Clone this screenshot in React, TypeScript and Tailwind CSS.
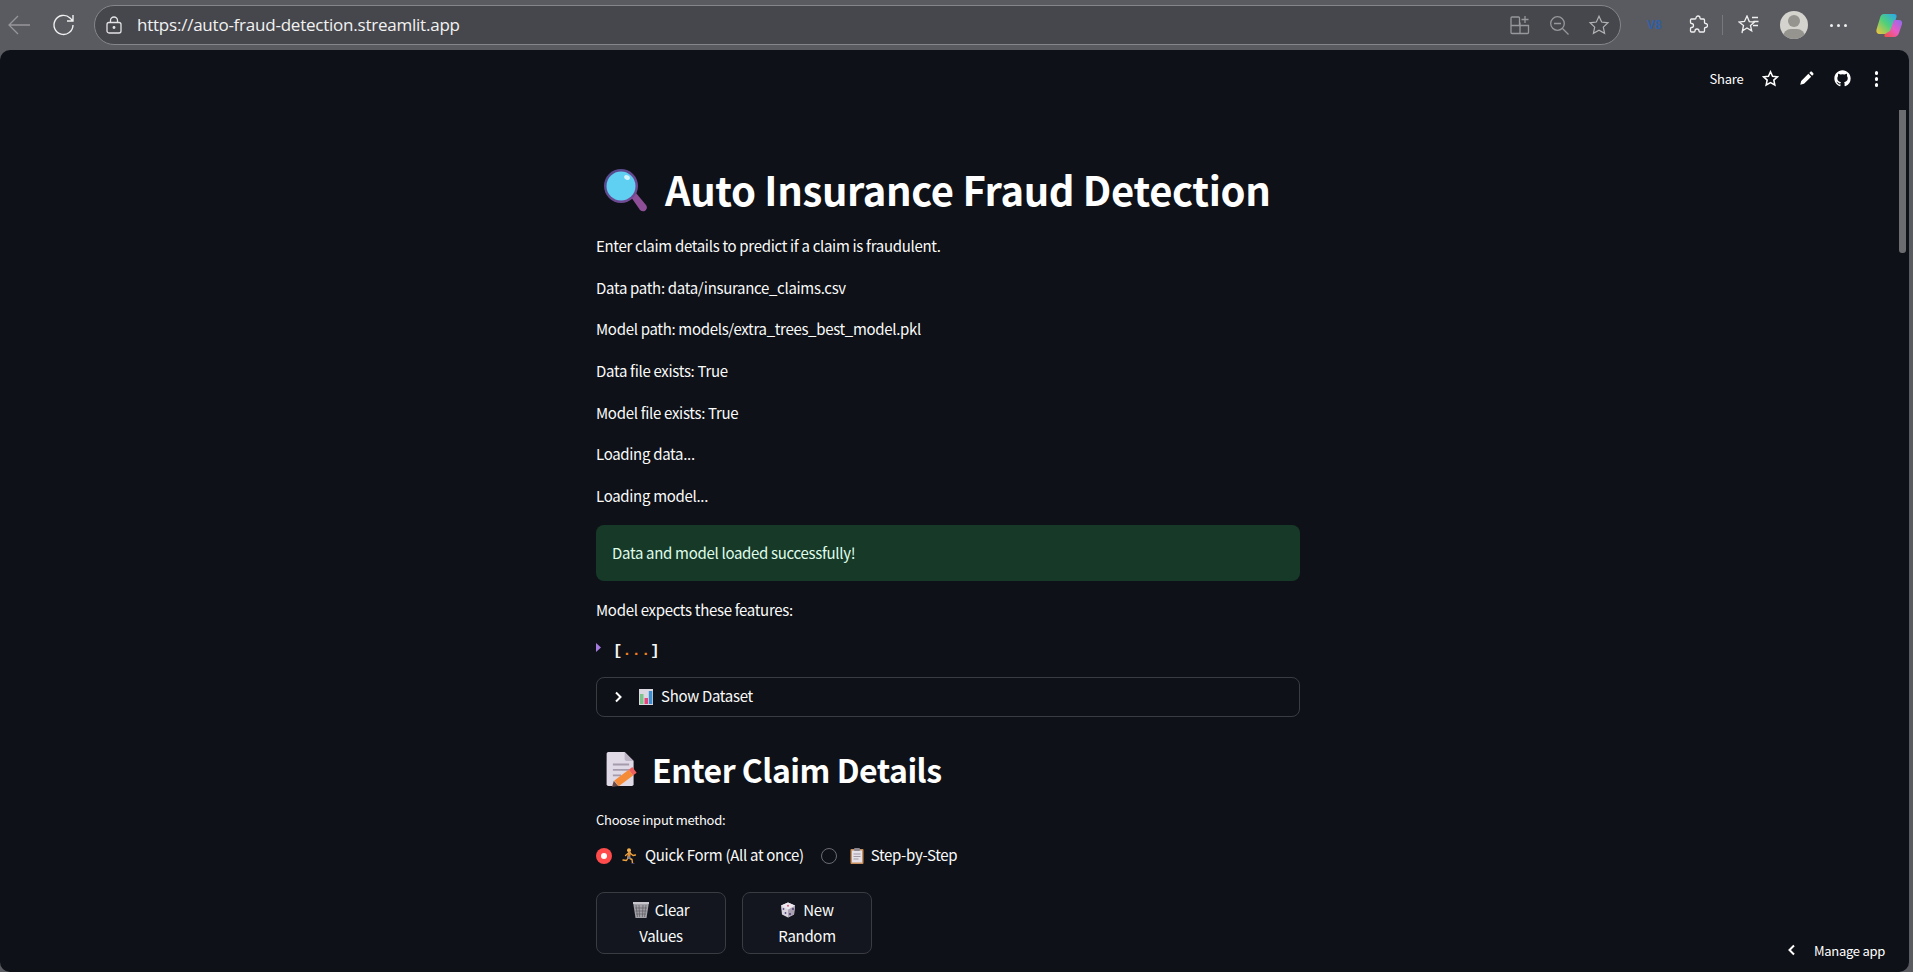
import React from "react";

const sans = "font-['Noto_Sans_CJK_SC',sans-serif]";

function Lens({ className = "" }: { className?: string }) {
  return (
    <svg viewBox="3 3 43 43" className={className}>
      <defs>
        <linearGradient id="lensRim" x1="0" y1="0" x2="1" y2="1">
          <stop offset="0" stopColor="#4f4a8c" />
          <stop offset="1" stopColor="#7a4a96" />
        </linearGradient>
      </defs>
      <path d="M30 31l5-4 10 12c1.500 2 1 4-.6 5.500-1.800 1.400-3.800 1-5.400-.5z" fill="#8f4f98" />
      <circle cx="20" cy="20" r="17" fill="url(#lensRim)" />
      <circle cx="20" cy="20" r="14.500" fill="#5fcff2" />
      <ellipse cx="26" cy="11.500" rx="3" ry="2.200" fill="#d4f3fb" transform="rotate(30 26 11.500)" />
    </svg>
  );
}

function Memo({ className = "" }: { className?: string }) {
  return (
    <svg viewBox="0 0 36 40" className={className}>
      <path d="M4 1h18l10 10v26a2 2 0 0 1-2 2H4a2 2 0 0 1-2-2V3a2 2 0 0 1 2-2z" fill="#e0d9e6" />
      <path d="M22 1l10 10h-8a2 2 0 0 1-2-2z" fill="#bdb4c6" />
      <path d="M9 15h18M9 21h18M9 27h9" stroke="#a49cac" strokeWidth="2" />
      <path d="M13 36l16-12" stroke="#f58a37" strokeWidth="8" />
      <path d="M29 24l4-3" stroke="#ef5f5c" strokeWidth="8" />
      <path d="M8 40l2-7 5 6z" fill="#6b4a46" />
    </svg>
  );
}

function Chart({ className = "" }: { className?: string }) {
  return (
    <svg viewBox="1 0 14 16" className={className}>
      <rect x="1" y="0" width="14" height="16" fill="#dcd8e2" />
      <rect x="2" y="5" width="3.500" height="10" fill="#7cc48a" />
      <rect x="6.500" y="9" width="3.500" height="6" fill="#e8447c" />
      <rect x="10.800" y="2" width="3.500" height="13" fill="#3d8fd1" />
    </svg>
  );
}

function Runner({ className = "" }: { className?: string }) {
  return (
    <svg viewBox="0 0 16 16" className={className}>
      <circle cx="7" cy="2.200" r="2" fill="#f5b04a" />
      <path d="M7.500 5l-1 4.500" stroke="#d98b3c" strokeWidth="3" strokeLinecap="round" />
      <path d="M8 5l3 2.500 2.500-.5M6.500 5L3.500 7.500" fill="none" stroke="#f1a33c" strokeWidth="1.300" strokeLinecap="round" strokeLinejoin="round" />
      <path d="M7 10l3 1.500 .5 3.500" fill="none" stroke="#f1a33c" strokeWidth="1.400" strokeLinecap="round" strokeLinejoin="round" />
      <path d="M6 10l-1.500 2.500L1 12" fill="none" stroke="#f1a33c" strokeWidth="1.400" strokeLinecap="round" strokeLinejoin="round" />
      <path d="M5.500 8.500h3v2.500h-3z" fill="#7e7f93" />
      <path d="M9.500 15.500h3" stroke="#3f3a66" strokeWidth="1" />
    </svg>
  );
}

function Clipboard({ className = "" }: { className?: string }) {
  return (
    <svg viewBox="0 0 14 16" className={className}>
      <rect x="0.500" y="1" width="13" height="15" rx="1" fill="#c88f5c" />
      <rect x="2" y="2.500" width="10" height="12" fill="#e6e1e8" />
      <rect x="4" y="0" width="6" height="3" rx="1" fill="#8b8790" />
      <path d="M3.500 6h7M3.500 8.500h7M3.500 11h5" stroke="#9e99a3" strokeWidth="1" />
    </svg>
  );
}

function Trash({ className = "" }: { className?: string }) {
  return (
    <svg viewBox="0 0 16 16" className={className}>
      <path d="M0 0h16l-2.500 16h-11z" fill="#a3a1a8" />
      <path d="M3 3l1.500 12M6 3l.6 12M10 3l-.6 12M13 3l-1.500 12M2 6h12M2.500 9h11M3 12h10" stroke="#5e5d63" strokeWidth=".7" />
      <rect x="0" y="0" width="16" height="2" fill="#c8c6cc" />
    </svg>
  );
}

function Die({ className = "" }: { className?: string }) {
  return (
    <svg viewBox="0 0 16 16" className={className}>
      <path d="M8 .500l7 3-1 9-6 3-6-3-1-9z" fill="#d8d3dc" />
      <path d="M8 7.500v8l6-3 1-9z" fill="#aaa2b2" />
      <path d="M1 3.500L8 .500l7 3-7 4z" fill="#ece8ef" />
      <circle cx="8" cy="3.800" r="1" fill="#e0567a" />
      <circle cx="3.500" cy="7" r=".9" fill="#5c4a86" />
      <circle cx="5.500" cy="11" r=".9" fill="#5c4a86" />
      <circle cx="10" cy="12" r=".9" fill="#453368" />
      <circle cx="13" cy="7" r=".9" fill="#453368" />
    </svg>
  );
}

function Para({ children }: { children: React.ReactNode }) {
  return <p className="text-[15px] tracking-[-0.310px] leading-[26px] mb-[15.700px]">{children}</p>;
}

function Browser() {
  return (
    <div className="h-[50px] shrink-0 bg-[#5a5b60] flex items-center pl-[7px] pr-[10px]">
      <svg viewBox="0 0 24 24" className="w-[24px] h-[24px] mr-[21px]" fill="none" stroke="#96979a" strokeWidth="1.300">
        <path d="M23 12H2M11 3l-9 9 9 9" />
      </svg>
      <svg viewBox="0 0 24 24" className="w-[24px] h-[24px] mr-[18px]" fill="none" stroke="#f0f0f0" strokeWidth="1.400">
        <path d="M21 12a9.500 9.500 0 1 1-3-7l3 3M21 2v6h-6" />
      </svg>
      <div className="flex-1 h-[40px] rounded-[20px] bg-[#46474c] border border-[#85868a] flex items-center pl-[11px] pr-[10px] mr-[26px]">
        <svg viewBox="0 0 16 18" className="w-[16px] h-[18px] mr-[15px]" fill="none" stroke="#e4e4e6" strokeWidth="1.300">
          <rect x="1" y="6.500" width="14" height="10.500" rx="2" />
          <path d="M4.500 6.500V4.500a3.500 3.500 0 0 1 7 0v2" />
          <circle cx="8" cy="11.500" r=".8" fill="#e4e4e6" />
        </svg>
        <span className="font-['Open_Sans',sans-serif] text-[17px] text-[#f2f2f2] tracking-[-0.230px]">https://auto-fraud-detection.streamlit.app</span>
        <div className="ml-auto flex items-center gap-[19px]">
          <svg viewBox="0 0 20 20" className="w-[20px] h-[20px]" fill="none" stroke="#97989b" strokeWidth="1.300">
            <path d="M10 7.500v11H2a1 1 0 0 1-1-1V3a1 1 0 0 1 1-1h6.500a1 1 0 0 1 1 1v7.500h9v7a1 1 0 0 1-1 1H10M1 10.500h9M15 1v7M11.500 4.500h7" />
          </svg>
          <svg viewBox="0 0 20 20" className="w-[20px] h-[20px]" fill="none" stroke="#97989b" strokeWidth="1.300">
            <circle cx="8.500" cy="8.500" r="6.800" />
            <path d="M5 8.500h7M13.500 13.500l6 6" />
          </svg>
          <svg viewBox="0 0 24 24" className="w-[22px] h-[22px]" fill="none" stroke="#b2b3b5" strokeWidth="1.300">
            <path d="M12 2.500l2.900 6.300 6.900.8-5.100 4.700 1.400 6.800-6.100-3.400-6.100 3.400 1.400-6.800-5.100-4.700 6.900-.8z" />
          </svg>
        </div>
      </div>
      <div className="w-[16px] h-[16px] text-[#2f5fa8] font-bold text-[12px] leading-[16px] font-['Liberation_Sans',sans-serif] mr-[25px]">V8</div>
      <svg viewBox="0 0 20 20" className="w-[20px] h-[20px] mr-[14px]" fill="none" stroke="#f0f0f0" strokeWidth="1.300">
        <path d="M8 3a2 2 0 0 1 4 0c0 1 .500 1 1 1h2.500a1 1 0 0 1 1 1v2.500c0 .500.500 1 1 1a2 2 0 0 1 0 4c-.500 0-1 .500-1 1V16a1 1 0 0 1-1 1H12c-.500 0-1-.500-1-1a2 2 0 0 0-4 0c0 .500-.500 1-1 1H3.500a1 1 0 0 1-1-1v-2.500c0-.500.500-1 1-1a2 2 0 0 0 0-4c-.500 0-1-.500-1-1V5a1 1 0 0 1 1-1H7c.500 0 1 0 1-1z" />
      </svg>
      <div className="w-px h-[20px] bg-[#77787c] mr-[15px]" />
      <svg viewBox="0 0 22 20" className="w-[22px] h-[20px] mr-[20px]" fill="none" stroke="#f0f0f0" strokeWidth="1.300">
        <path d="M9 1l2.300 5.600 5.200.4-4 3.400 1.200 5.500L9 13l-4.700 3-.3 2 1.500-7.600L1 7l5.500-.5zM14 2.500h6M15.500 6.500h5M15 10.500h5" />
      </svg>
      <div className="w-[28px] h-[28px] rounded-full bg-[#d5d3cd] relative overflow-hidden mr-[22px]">
        <div className="absolute left-[8px] top-[4px] w-[12px] h-[12px] rounded-full bg-[#96948f]" />
        <div className="absolute left-[3px] top-[18px] w-[22px] h-[16px] rounded-full bg-[#96948f]" />
      </div>
      <div className="flex gap-[4px] mr-[28px]">
        <i className="w-[3px] h-[3px] rounded-full bg-[#f0f0f0]" />
        <i className="w-[3px] h-[3px] rounded-full bg-[#f0f0f0]" />
        <i className="w-[3px] h-[3px] rounded-full bg-[#f0f0f0]" />
      </div>
      <svg viewBox="0 0 28 28" className="w-[28px] h-[28px]">
        <defs>
          <linearGradient id="cp1" x1="0" y1="1" x2="1" y2="0">
            <stop offset="0" stopColor="#f9c33a" />
            <stop offset=".5" stopColor="#4fd07a" />
            <stop offset="1" stopColor="#2aa6f0" />
          </linearGradient>
          <linearGradient id="cp2" x1="0" y1="1" x2="1" y2="0">
            <stop offset="0" stopColor="#f4503c" />
            <stop offset=".5" stopColor="#e85bc4" />
            <stop offset="1" stopColor="#8a6cf0" />
          </linearGradient>
        </defs>
        <path d="M9 3h10c2 0 3 1 2.500 3L17 20c-.600 2-2 3-4 3H5c-3 0-4-2-3.500-4.500L5 7c.500-2.500 2-4 4-4z" fill="url(#cp1)" />
        <path d="M19 9h5c2.500 0 3.500 2 3 4l-3 9c-.600 2-2.500 4-5 4h-8c-2 0-2-2-1-3l5-3z" fill="url(#cp2)" />
      </svg>
    </div>
  );
}

export default function App() {
  return (
    <div className={`w-[1913px] h-[972px] overflow-hidden bg-[#5a5b60] flex flex-col ${sans}`}>
      <Browser />
      <div className="flex-1 min-h-0 mr-[4px] rounded-[10px] bg-[#0e1117] text-[#fafafa] relative overflow-hidden">
        <div className="flex items-center justify-end pt-[19px] pr-[31px] text-white">
          <span className="text-[13px] tracking-[-0.200px] mr-[18px]">Share</span>
          <svg viewBox="0 0 24 24" className="w-[17px] h-[17px] mr-[20px]" fill="none" stroke="#fff" strokeWidth="2.200">
            <path d="M12 2.500l2.900 6.300 6.900.8-5.100 4.700 1.400 6.800-6.100-3.400-6.100 3.400 1.400-6.800-5.100-4.700 6.900-.8z" />
          </svg>
          <svg viewBox="0 0 24 24" className="w-[15px] h-[15px] mr-[20px]" fill="#fff">
            <path d="M2 22l1.500-6L15 4.500l4.500 4.500L8 20.500zM16.500 3l1.500-1.500c1-1 2-1 3 0l1.500 1.500c1 1 1 2 0 3L21 7.500z" />
          </svg>
          <svg viewBox="0 0 24 24" className="w-[17px] h-[17px] mr-[24px]" fill="#fff">
            <path d="M12 .5C5.650.5.500 5.650.500 12c0 5.080 3.290 9.390 7.860 10.910.580.100.790-.250.790-.550v-2.150c-3.200.700-3.870-1.360-3.870-1.360-.520-1.330-1.280-1.680-1.280-1.680-1.040-.710.080-.700.080-.700 1.160.080 1.770 1.190 1.770 1.190 1.030 1.760 2.700 1.250 3.360.960.100-.750.400-1.250.730-1.540-2.560-.290-5.250-1.280-5.250-5.690 0-1.260.450-2.280 1.190-3.090-.120-.290-.520-1.460.110-3.050 0 0 .970-.310 3.170 1.180a11 11 0 0 1 5.780 0c2.200-1.490 3.170-1.180 3.170-1.180.630 1.590.230 2.760.110 3.050.740.810 1.190 1.830 1.190 3.090 0 4.420-2.700 5.390-5.260 5.680.410.360.780 1.050.780 2.120v3.150c0 .310.210.660.800.550A11.500 11.500 0 0 0 23.500 12C23.500 5.650 18.350.5 12 .5z" />
          </svg>
          <div className="flex flex-col gap-[2.500px]">
            <i className="w-[3.500px] h-[3.500px] rounded-full bg-white" />
            <i className="w-[3.500px] h-[3.500px] rounded-full bg-white" />
            <i className="w-[3.500px] h-[3.500px] rounded-full bg-white" />
          </div>
        </div>

        <div className="absolute right-[3px] top-[60px] w-[7px] h-[143px] rounded-b-[3px] bg-[#6b6c70]" />

        <div className="w-[704px] ml-[596px] mt-[74.500px]">
          <h1 className="flex items-center text-[40px] tracking-[-0.370px] leading-[52px] font-bold text-white mb-[18px] whitespace-nowrap">
            <Lens className="w-[43px] h-[43px] ml-[8px] mr-[18px] mt-[3px]" />
            Auto Insurance Fraud Detection
          </h1>
          <Para>Enter claim details to predict if a claim is fraudulent.</Para>
          <Para>Data path: data/insurance_claims.csv</Para>
          <Para>Model path: models/extra_trees_best_model.pkl</Para>
          <Para>Data file exists: True</Para>
          <Para>Model file exists: True</Para>
          <Para>Loading data...</Para>
          <Para>Loading model...</Para>

          <div className="h-[56px] rounded-[8px] bg-[#173928] text-[#dffde9] text-[15px] tracking-[-0.310px] flex items-center px-[16px] mb-[16px]">
            Data and model loaded successfully!
          </div>
          <Para>Model expects these features:</Para>

          <div className="flex items-start h-[26px] mb-[12px]">
            <svg viewBox="0 0 5 9" className="w-[5px] h-[9px] mt-[4px] mr-[12px]">
              <path d="M0 0l5 4.500L0 9z" fill="#a67be0" />
            </svg>
            <span className="font-['Liberation_Mono',monospace] text-[15.500px] font-bold text-[#f5f5f5] leading-[26px] -mt-[1px]">
              [<span className="text-[#f0811e]">...</span>]
            </span>
          </div>

          <div className="h-[40px] rounded-[8px] border border-[#3a3c42] flex items-center pl-[15px] text-[15px] tracking-[-0.310px]">
            <svg viewBox="0 0 12 12" className="w-[12px] h-[12px] mr-[15px]" fill="none" stroke="#fff" strokeWidth="2">
              <path d="M4 1.500L8.500 6 4 10.500" />
            </svg>
            <Chart className="w-[14px] h-[16px] mr-[8px]" />
            Show Dataset
          </div>

          <h2 className="flex items-center text-[32px] tracking-[-0.500px] leading-[42px] font-semibold text-white mt-[31px] mb-[20px] whitespace-nowrap">
            <Memo className="w-[34px] h-[36px] ml-[8px] mr-[14px]" />
            Enter Claim Details
          </h2>

          <div className="text-[13px] tracking-[-0.280px] leading-[20px] mb-[14px]">Choose input method:</div>

          <div className="flex items-center h-[24px] text-[15px] tracking-[-0.310px] mb-[24px]">
            <div className="w-[16px] h-[16px] rounded-full bg-[#ff4b4b] flex items-center justify-center mr-[10px]">
              <div className="w-[6px] h-[6px] rounded-full bg-white" />
            </div>
            <Runner className="w-[16px] h-[16px] mr-[7px]" />
            Quick Form (All at once)
            <div className="w-[16px] h-[16px] rounded-full border border-[#6a6c72] ml-[17px] mr-[13px]" />
            <Clipboard className="w-[14px] h-[16px] mr-[7px]" />
            Step-by-Step
          </div>

          <div className="flex gap-[16px]">
            <div className="w-[130px] h-[62px] rounded-[8px] border border-[#3a3c42] bg-[#13161e] text-[15px] tracking-[-0.310px] leading-[26px] flex flex-col items-center justify-center">
              <span className="flex items-center"><Trash className="w-[16px] h-[16px] mr-[6px]" />Clear</span>
              <span>Values</span>
            </div>
            <div className="w-[130px] h-[62px] rounded-[8px] border border-[#3a3c42] bg-[#13161e] text-[15px] tracking-[-0.310px] leading-[26px] flex flex-col items-center justify-center">
              <span className="flex items-center"><Die className="w-[16px] h-[16px] mr-[7px]" />New</span>
              <span>Random</span>
            </div>
          </div>
        </div>

        <div className="absolute right-[24px] bottom-[12px] flex items-center text-[13px] tracking-[-0.280px] text-white">
          <svg viewBox="0 0 12 12" className="w-[12px] h-[12px] mr-[16px]" fill="none" stroke="#fff" strokeWidth="2">
            <path d="M8 1.500L3.500 6 8 10.500" />
          </svg>
          Manage app
        </div>
      </div>
    </div>
  );
}
